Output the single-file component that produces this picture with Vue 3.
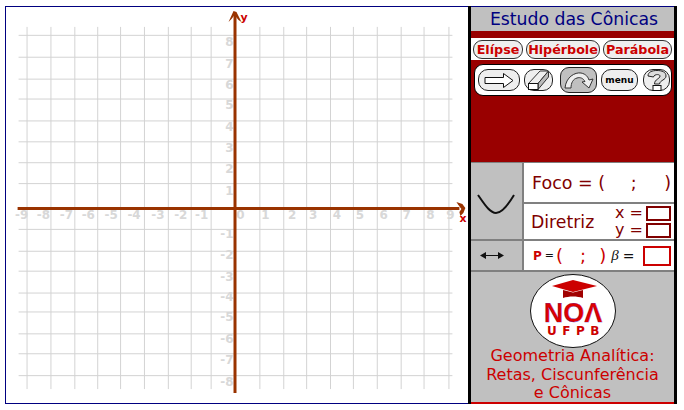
<template>
  <div class="page">
    <!-- plano cartesiano -->
    <svg class="plane" width="463" height="398" viewBox="5 6 463 398" xmlns="http://www.w3.org/2000/svg">
      <g class="grid">
        <line v-for="x in gridX" :key="'v' + x" :x1="x + 0.5" y1="26" :x2="x + 0.5" y2="390" />
        <line v-for="y in gridY" :key="'h' + y" x1="17" :y1="y + 0.5" x2="453" :y2="y + 0.5" />
      </g>
      <g class="ticks">
        <text v-for="t in labelsX" :key="'x' + t.n" :x="t.x" y="219" text-anchor="middle">{{ t.n }}</text>
        <text v-for="t in labelsY" :key="'y' + t.n" x="233" :y="t.y" text-anchor="end">{{ t.n }}</text>
      </g>
      <g class="axis">
        <line x1="234.5" y1="14" x2="234.5" y2="394" />
        <line x1="16" y1="208.5" x2="460" y2="208.5" />
        <path d="M233 10 L236 11 L241 21 L238 19 L234 14 L231 18 L228 21 Z" />
        <path d="M457 202 L463 204 L466 208 L464 213 L461 216 L460 212 L462 209 L459 205 Z" />
      </g>
      <text class="axis-name" x="240" y="20">y</text>
      <text class="axis-name" x="460" y="222">x</text>
    </svg>

    <div class="side">
      <div class="title">Estudo das Cônicas</div>

      <div class="conics">
        <span v-for="c in conics" :key="c.name" class="pill" :style="{ width: c.w + 'px' }">{{ c.name }}</span>
      </div>

      <div class="tools-wrap">
        <div class="tools">
          <div class="tool arrow">
            <svg width="30" height="15" viewBox="0 0 30 15">
              <path d="M1 4.500 H19.500 V.5 L29 7.500 L19.500 14.500 V10.500 H1 Z" fill="#fff" stroke="#111" />
            </svg>
          </div>
          <div class="tool eraser">
            <svg width="23" height="20" viewBox="0 0 23 20">
              <path d="M1.500 13.500 L13 1 H21.500 L11 13.500 Z" fill="#eee" stroke="#333" />
              <path d="M11 13.500 L21.500 1 V7 L11 19.500 Z" fill="#bbb" stroke="#333" />
              <rect x="1.500" y="13.500" width="9.500" height="6" fill="#fff" stroke="#111" />
            </svg>
          </div>
          <div class="tool undo">
            <svg width="30" height="19" viewBox="0 0 30 19">
              <path d="M1 17 C2 6 11 1 17 2 C22 3 24 6 25 9 L29 8 L25 17 L18 11 L21 10.500 C19 7 16 6 13 7 C9 8 7 12 7 17 Z" fill="#eee" stroke="#333" />
            </svg>
          </div>
          <div class="tool menu">menu</div>
          <div class="tool help">
            <svg width="20" height="21" viewBox="0 0 20 21">
              <path d="M1 6 C1 2 5 .5 10 .5 C15 .5 19 2 19 6 C19 10 13 10 12.500 14 H7.500 C7.500 9 13 9 13 6 C13 4 7 4 6.500 7 Z" fill="#ddd" stroke="#222" />
              <rect x="6" y="15.500" width="8" height="5" fill="#fff" stroke="#111" />
            </svg>
          </div>
        </div>
      </div>

      <div class="table">
        <div class="cell curve">
          <svg width="40" height="24" viewBox="0 0 40 24">
            <path d="M1 1 C8 11 13 19 19 19 C25 19 31 11 37 1" fill="none" stroke="#111" stroke-width="2" />
          </svg>
        </div>
        <div class="cell foco">
          <span>Foco = (</span><span class="semi-foco">;</span><span>)</span>
        </div>
        <div class="cell diretriz">
          <span>Diretriz</span>
          <div class="coords">
            <div class="coord"><span>x =</span><i class="box"></i></div>
            <div class="coord"><span>y =</span><i class="box"></i></div>
          </div>
        </div>
        <div class="cell move">
          <svg width="24" height="9" viewBox="0 0 24 9">
            <path d="M0 4.500 L6 1 V4 H18 V1 L24 4.500 L18 8 V5 H6 V8 Z" fill="#111" />
          </svg>
        </div>
        <div class="cell param">
          <b>P</b><em class="eq">=</em>
          <span class="par">(</span><span class="par semi">;</span><span class="par">)</span>
          <em class="beta">β</em><em class="eq big">=</em>
          <i class="box red"></i>
        </div>
      </div>

      <div class="foot">
        <svg class="logo" width="88" height="76" viewBox="0 0 88 76">
          <ellipse cx="44" cy="38" rx="42.500" ry="36.500" fill="#fff" stroke="#111" />
          <path d="M44 7 L68 13 L44 19 L23 13 Z" fill="#cc0000" />
          <path d="M34 17 L44 19.500 L54 17 V25 C48 23 40 23 34 25 Z" fill="#a00000" />
          <text class="noa" x="44" y="49" text-anchor="middle">NOΛ</text>
          <text class="ufpb" x="47" y="62" text-anchor="middle">UFPB</text>
        </svg>
        <p>Geometria Analítica:<br />Retas, Ciscunferência<br />e Cônicas</p>
      </div>
    </div>
  </div>
</template>

<script setup>
const gridX = [25, 49, 73, 96, 119, 143, 167, 190, 210, 259, 283, 306, 330, 353, 377, 401, 424, 449]
const gridY = [34, 56, 78, 98, 120, 141, 162, 183, 229, 251, 271, 293, 312, 334, 354, 376]

const labelsX = [
  [-9, 20], [-8, 42], [-7, 65], [-6, 87], [-5, 110], [-4, 133], [-3, 157], [-2, 180], [-1, 201],
  [0, 240], [1, 265], [2, 292], [3, 313], [4, 337], [5, 360], [6, 384], [7, 407], [8, 431], [9, 451]
].map(([n, x]) => ({ n, x }))

const labelsY = [
  [8, 45], [7, 67], [6, 88], [5, 109], [4, 131], [3, 152], [2, 173], [1, 195],
  [-1, 238], [-2, 259], [-3, 281], [-4, 302], [-5, 322], [-6, 344], [-7, 365], [-8, 387]
].map(([n, y]) => ({ n, y }))

const conics = [
  { name: 'Elípse', w: 50 },
  { name: 'Hipérbole', w: 74 },
  { name: 'Parábola', w: 69 }
]
</script>

<style scoped>
.page {
  display: flex;
  width: 684px;
  height: 410px;
  padding: 6px 0 0 5px;
  box-sizing: border-box;
  overflow: hidden;
  background: #fff;
  font-family: "DejaVu Sans", sans-serif;
}

.plane {
  flex: none;
  box-sizing: border-box;
  border: 1px solid #000080;
  border-right: 0;
  background: #fff;
}

.grid line {
  stroke: #d3d3d3;
  stroke-width: 1;
}

.ticks text {
  fill: #d8d8d8;
  font: bold 12px "DejaVu Sans", sans-serif;
}

.axis line {
  stroke: #993300;
  stroke-width: 3;
}

.axis path {
  fill: #993300;
}

.axis-name {
  fill: #cc0000;
  font: bold 11px "DejaVu Sans", sans-serif;
}

.side {
  flex: none;
  display: flex;
  flex-direction: column;
  width: 203px;
  height: 398px;
  border-left: 3px solid #000;
  border-right: 3px solid #000;
  background: #990000;
}

.title {
  flex: none;
  height: 24px;
  line-height: 24px;
  border-top: 1px solid #000080;
  background: #c0c0c0;
  color: #000080;
  font-size: 17.300px;
  text-align: center;
  text-indent: 3px;
}

.conics {
  flex: none;
  display: flex;
  justify-content: space-between;
  align-items: center;
  height: 22px;
  margin-top: 7px;
  padding: 0 2px;
  background: #fff;
}

.pill {
  box-sizing: border-box;
  height: 19px;
  line-height: 17px;
  border: 1px solid #333;
  border-radius: 9px;
  background: #eee;
  color: #cc0000;
  font-size: 12.700px;
  font-weight: bold;
  text-align: center;
  white-space: nowrap;
}

.tools-wrap {
  flex: none;
  height: 102px;
  padding: 4px 2px 0 3px;
  box-sizing: border-box;
}

.tools {
  display: flex;
  align-items: center;
  height: 32px;
  padding: 0 3px;
  gap: 4px;
  box-sizing: border-box;
  border: 1px solid #000;
  border-radius: 9px;
  background: #fff;
}

.tool {
  flex: none;
  display: flex;
  align-items: center;
  justify-content: center;
  box-sizing: border-box;
  height: 22px;
  border: 1px solid #222;
  border-radius: 10px;
  background: #eee;
}

.arrow { width: 42px; }
.eraser { width: 29px; margin-right: 3px; }
.undo { width: 37px; height: 26px; background: #c0c0c0; border-radius: 9px; }
.menu { width: 37px; font-size: 9px; font-weight: bold; color: #000; }
.help { width: 27px; margin-left: 1px; }

.table {
  flex: none;
  display: grid;
  grid-template-columns: 51px 1fr;
  grid-template-rows: 39px 35px 29px;
  gap: 2px;
  height: 110px;
  padding: 1px 0 2px;
  box-sizing: border-box;
  background: #808080;
}

.cell {
  display: flex;
  align-items: center;
  background: #fff;
  color: #800000;
}

.curve,
.move {
  justify-content: center;
  background: #c0c0c0;
}

.curve {
  grid-row: span 2;
  padding: 10px 0 0 1px;
  box-sizing: border-box;
}

.move {
  padding-right: 10px;
  box-sizing: border-box;
}

.foco {
  justify-content: space-between;
  padding: 0 3px 0 8px;
  font-size: 17.500px;
}

.semi-foco {
  margin-right: 2px;
}

.diretriz {
  justify-content: space-between;
  padding: 0 3px 0 7px;
  font-size: 17.300px;
}

.coords {
  display: flex;
  flex-direction: column;
  gap: 1px;
}

.coord {
  display: flex;
  align-items: center;
  justify-content: flex-end;
  gap: 3px;
  height: 16px;
  line-height: 16px;
  font-size: 16px;
}

.box {
  display: block;
  box-sizing: border-box;
  width: 25px;
  height: 15px;
  border: 2px solid #800000;
  background: #fff;
}

.param {
  padding-left: 9px;
  color: #cc0000;
}

.param b {
  font-size: 12px;
  margin-right: 3px;
}

.eq {
  font-style: normal;
  font-size: 11px;
  color: #111;
}

.eq.big {
  font-size: 14px;
  margin-left: 4px;
}

.par {
  font-size: 18px;
  margin-left: 2px;
}

.semi {
  margin-left: 17px;
  margin-right: 11px;
}

.beta {
  font-family: "Liberation Serif", serif;
  font-size: 15px;
  color: #111;
  margin-left: 5px;
}

.box.red {
  width: 28px;
  height: 20px;
  margin-left: 9px;
  border-color: #cc0000;
}

.foot {
  flex: none;
  height: 132px;
  box-sizing: border-box;
  display: flex;
  flex-direction: column;
  align-items: center;
  border-bottom: 2px solid #cc0000;
  background: #c0c0c0;
  color: #cc0000;
}

.logo {
  flex: none;
  margin-top: 1px;
}

.noa {
  fill: #dd0000;
  stroke: #4444dd;
  stroke-width: 0.25;
  font: bold 27px "Liberation Sans", sans-serif;
}

.ufpb {
  fill: #cc0000;
  font: bold 12px "DejaVu Sans", sans-serif;
  letter-spacing: 5.500px;
}

.foot p {
  margin: -2px 0 0;
  font-size: 16px;
  line-height: 18.500px;
  text-align: center;
  white-space: nowrap;
}
</style>
